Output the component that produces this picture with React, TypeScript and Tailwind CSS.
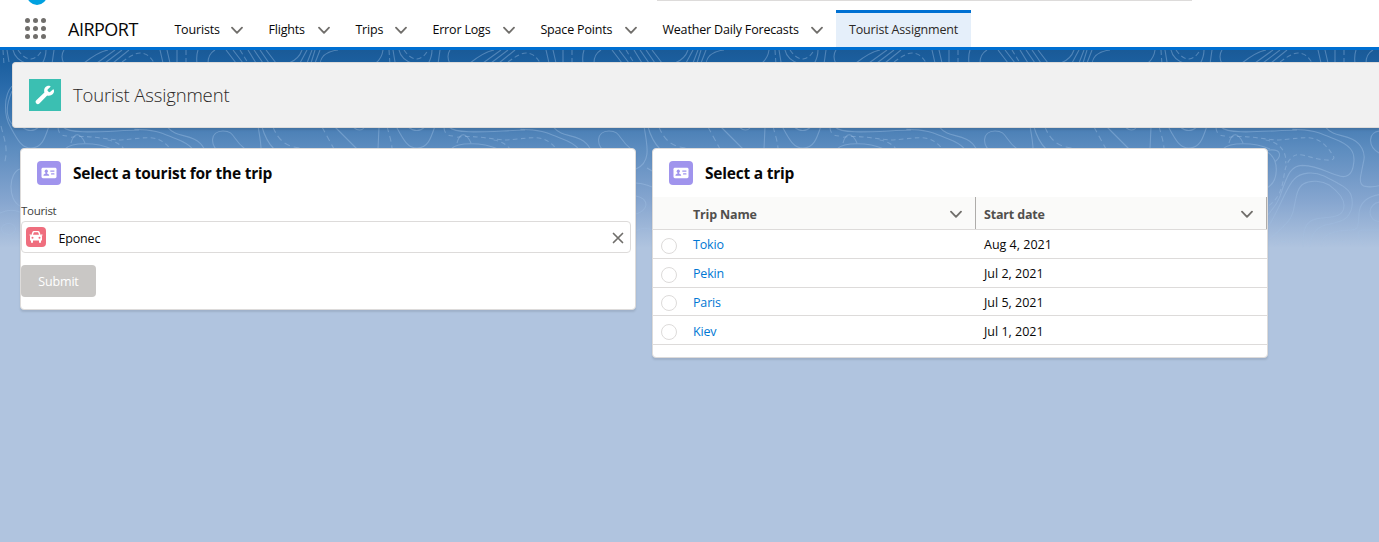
import React from "react";

const NAV = [
  { label: "Tourists", width: "w-[94px]" },
  { label: "Flights", width: "w-[87px]" },
  { label: "Trips", width: "w-[77px]" },
  { label: "Error Logs", width: "w-[108px]" },
  { label: "Space Points", width: "w-[122px]" },
  { label: "Weather Daily Forecasts", width: "w-[186px]" },
];

const TRIPS = [
  { name: "Tokio", date: "Aug 4, 2021", height: "h-[29px]", shift: "pt-[2px]" },
  { name: "Pekin", date: "Jul 2, 2021", height: "h-[29px]", shift: "pt-[2px]" },
  { name: "Paris", date: "Jul 5, 2021", height: "h-[28px]", shift: "pt-[3px]" },
  { name: "Kiev", date: "Jul 1, 2021", height: "h-[29px]", shift: "pt-[4px]" },
];

const TILE = 386;

function Chevron() {
  return (
    <svg className="shrink-0" width="12" height="8" viewBox="0 0 12 8" fill="none" stroke="#706e6b" strokeWidth="1.8" strokeLinecap="round" strokeLinejoin="round">
      <path d="M1 1.6 6 6.8 11 1.6" />
    </svg>
  );
}

function ContactIcon() {
  return (
    <span className="flex size-6 shrink-0 items-center justify-center rounded bg-[#a094ed]">
      <svg width="16" height="12" viewBox="0 0 16 12">
        <rect x="0.5" y="0.8" width="15" height="10.4" rx="1.4" fill="#fff" />
        <g fill="#a094ed">
          <circle cx="5.3" cy="4.2" r="1.6" />
          <path d="M2.4 8.7c0-1.6 1.2-1.9 2.2-2.3V5h1.4v1.4c1 .4 2.2.7 2.2 2.3z" />
          <rect x="9.2" y="3.4" width="4.3" height="1.3" rx=".4" />
          <rect x="10" y="6.3" width="3.5" height="1.3" rx=".4" />
        </g>
      </svg>
    </span>
  );
}

function ContourTile() {
  return (
    <>
      <path d="M7 50 9 62M13 50Q15 60 28 64M46 50Q46 57 42 64M54 50 52 64M64 50Q60 56 64 64M108 50Q98 52 84 63M115 50 97 63M122 50 105 63M129 50 113 63" />
      <path d="M160 50 163 63M167 50 170 63M177 50V63M198 50Q196 56 197 63M215 50Q208 54 208 63M226 50 236 63M233 50 243 63M248 50 256 63M254 50 263 63M260 50 269 63M266 50 276 63" />
      <path d="M289 63Q299 59 302 50M307 50 300 63M312 50 307 63M315 50 311 63M320 50 315 63M338 50Q322 52 320 63M376 63Q382 58 383 50" />
      <path strokeDasharray="5 3" d="M3 50 4 65M18 50Q24 59 31 59 38 58 42 50M122 62Q134 53 140 53 149 53 154 63M186 50V63M240 50 248 63" />
      <path d="M12 86C4 95 3 115 11 128 18 141 22 148 31 148 42 148 45 138 49 126M12 91C6 105 6 117 12 124M22 127Q31 134 39 127" />
      <path d="M20 169C9 172 7 199 20 206M0 213Q10 208 20 212" />
      <ellipse cx="8.5" cy="229" rx="7" ry="5.5" />
      <path strokeDasharray="6 4" d="M1 126C4 139 9 148 4 165M58 127Q58 136 67 136M273 127Q281 148 302 148M322 127 334 149" />
      <path d="M71 143C74 132 80 132 85 143M65 149C72 142 96 142 112 149M335 127 357 149M353 127Q360 133 365 127M379 127 378 149M262 127Q266 141 274 149M221 153C209 146 210 131 223 131 235 131 232 139 245 149" />
      <path d="M63 127C71 135 105 131 139 130" />
      <g transform="translate(101 126) scale(.3333)" strokeWidth="3.3">
        <path d="M100 10C170 10 190 25 225 38C270 55 290 75 284 112C280 150 260 158 235 148C205 140 180 120 130 118C95 118 85 150 70 190C60 230 40 250 20 275" />
        <path d="M200 4C222 30 250 25 280 40C308 54 318 80 315 100L306 145C300 172 308 182 325 182Q345 184 365 178" />
        <path d="M20 315C65 245 80 185 105 160C125 138 165 136 195 150C235 170 268 185 276 207C287 240 274 275 245 285C210 298 190 292 170 315C155 330 152 350 153 375" />
        <path d="M20 350C70 302 98 290 105 245C112 210 115 185 133 174C155 160 190 165 212 178C235 195 256 215 255 240C254 276 215 272 175 278C130 285 132 325 132 375" />
        <path d="M365 205C330 210 303 225 300 262C298 300 300 311 275 312C235 314 215 318 198 332Q186 345 183 375M365 228C325 230 320 285 365 288M365 312H310C290 312 298 342 330 378" />
        <path d="M22 73C75 65 65 95 47 108M25 78C62 100 60 165 24 186" />
        <path strokeDasharray="14 10" d="M-90 34C-40 25 20 42 60 42 110 38 130 33 155 36 185 40 205 60 224 92 230 108 190 102 165 96 120 84 112 80 95 98 62 130 90 195 28 240M20 42C45 45 85 65 80 112M45 360Q75 335 110 355M198 362Q235 332 275 355" />
      </g>
      <path d="M258 126C261 145 266 162 250 169M261 168 273 175M250 183Q262 184 272 190M250 196Q260 198 260 205 259 211 250 214M250 231Q261 224 273 235" />
    </>
  );
}

function Backdrop() {
  return (
    <svg className="pointer-events-none absolute inset-x-0 top-0 -z-10" width="1379" height="198" viewBox="0 50 1379 198" aria-hidden="true">
      <defs>
        <linearGradient id="fade" x1="0" y1="0" x2="0" y2="1">
          <stop offset="0" stopColor="#fff" />
          <stop offset=".7" stopColor="#fff" />
          <stop offset="1" stopColor="#fff" stopOpacity="0.25" />
        </linearGradient>
        <mask id="fadeMask" maskUnits="userSpaceOnUse" x="-10" y="50" width="1400" height="198">
          <rect x="-10" y="50" width="1400" height="198" fill="url(#fade)" />
        </mask>
      </defs>
      <g mask="url(#fadeMask)" fill="none" stroke="#a9c8ea" strokeOpacity=".38" strokeWidth="1.1">
        {[0, 1, 2, 3].map((n) => (
          <g key={n} transform={`translate(${n * TILE} 0)`}>
            <ContourTile />
          </g>
        ))}
      </g>
    </svg>
  );
}

function Card({ title, className, children }: { title: string; className: string; children: React.ReactNode }) {
  return (
    <section className={`w-[616px] rounded border border-[#dddbda] bg-white shadow-[0_2px_2px_rgba(0,0,0,0.1)] ${className}`}>
      <header className="flex h-12 items-center gap-3 pl-4">
        <ContactIcon />
        <h2 className="whitespace-nowrap pt-[2px] text-[15.5px] font-bold tracking-[-0.22px] text-[#080707]">{title}</h2>
      </header>
      {children}
    </section>
  );
}

export default function App() {
  return (
    <div className="flex h-[542px] w-[1379px] flex-col overflow-hidden bg-[#b0c4df] font-['Open_Sans','Noto_Sans',sans-serif] text-[12.5px] tracking-[-0.17px] text-[#080707]">
      <header className="relative flex h-[50px] shrink-0 border-b-[3px] border-[#0070d2] bg-white">
        <span className="absolute left-[27px] top-[-15px] size-5 rounded-full bg-[#00a1e0]" />
        <span className="absolute left-[657px] top-0 h-px w-[535px] bg-[#dddbda]" />
        <div className="flex w-[162px] shrink-0 items-center pt-[11px]">
          <svg className="ml-[25px] shrink-0" width="22" height="22" viewBox="0 0 22 22" fill="#706e6b">
            {[3, 11, 19].map((y) => [3, 11, 19].map((x) => <circle key={`${x}-${y}`} cx={x - 0.5} cy={y - 0.5} r="2.5" />))}
          </svg>
          <span className="ml-[21px] whitespace-nowrap text-[18px] tracking-[-0.5px]">AIRPORT</span>
        </div>
        <nav className="flex pt-[10px]">
          {NAV.map((item) => (
            <a key={item.label} className={`flex h-[37px] items-center justify-between whitespace-nowrap pl-[12.4px] pr-[13px] pt-[3px] ${item.width}`}>
              <span>{item.label}</span>
              <Chevron />
            </a>
          ))}
          <a className="flex h-[37px] w-[135px] items-center justify-center whitespace-nowrap border-t-[3px] border-[#0070d2] bg-[#e5effa] text-[#2b2826]">
            Tourist Assignment
          </a>
        </nav>
      </header>

      <main className="relative isolate flex-1">
        <div className="absolute inset-x-0 top-0 -z-20 h-[198px] bg-[linear-gradient(to_bottom,#1a5a97_0px,#1b5f9f_12px,#2a6bab_38px,#4a7fb5_78px,#5c8cbf_98px,#85a5cf_150px,#b0c4df_198px)]" />
        <Backdrop />
        <div className="ml-3 mt-3 flex h-[66px] items-center gap-3 rounded-l border border-r-0 border-[#dddbda] bg-[#f1f1f1] pl-4 shadow-[0_2px_2px_rgba(0,0,0,0.1)]">
          <span className="flex size-8 items-center justify-center bg-[#3bbfb2]">
            <svg width="20" height="20" viewBox="0 0 20 20" fill="#fff">
              <path d="M17.900 4.400 15.300 6.700a1.300 1.300 0 0 1-1.800 0L12.900 6.100a1.300 1.300 0 0 1 0-1.800L15.300 1.900a.5.5 0 0 0-.3-.9C12 .2 8.700 2.600 9.200 6.500c0 .4.1.8.2 1.100L1.300 15.300a2.200 2.200 0 0 0 0 3.100 2.200 2.200 0 0 0 3.100 0L12.200 10.500c.4.1.8.2 1.200.2 4 .3 6.400-3 5.400-6a.55.55 0 0 0-.9-.3z" />
            </svg>
          </span>
          <h1 className="whitespace-nowrap text-[18.5px] font-light tracking-[-0.15px] text-[#2b2826]">Tourist Assignment</h1>
        </div>

        <div className="ml-5 mt-5 flex items-start gap-4">
          <Card title="Select a tourist for the trip" className="h-[162px]">
            <div className="pr-1">
              <label className="mt-[5px] block h-[19px] text-[11.5px] leading-[18px] tracking-[-0.3px] text-[#3e3e3c]">Tourist</label>
              <div className="flex h-8 w-[610px] items-center rounded border border-[#dddbda] pl-1 pr-[6px]">
                <span className="flex size-5 items-center justify-center rounded bg-[#ef6e7e]">
                  <svg width="14" height="14" viewBox="0 0 14 14">
                    <path fill="#fff" d="M2.300 5 3.300 2.200Q3.700 1 4.900 1H9.100Q10.300 1 10.700 2.200L11.700 5Q13 5.200 13 6.500V10.500H12V12Q12 13 11 13T10 12V10.500H4V12Q4 13 3 13T2 12V10.500H1V6.500Q1 5.200 2.300 5Z M12 4.500h1.500v1H12zM.5 4.500H2v1H.5z" />
                    <path fill="#ef6e7e" d="M4 4.800 4.700 2.700Q4.800 2.300 5.200 2.300H8.800Q9.200 2.300 9.300 2.700L10 4.800Z" />
                    <circle cx="3.500" cy="7.800" r="1" fill="#ef6e7e" />
                    <circle cx="10.500" cy="7.800" r="1" fill="#ef6e7e" />
                  </svg>
                </span>
                <span className="ml-[12.5px] flex-1 pt-[4px]">Eponec</span>
                <svg className="mt-[2px]" width="12" height="12" viewBox="0 0 12 12" fill="none" stroke="#706e6b" strokeWidth="1.7" strokeLinecap="round">
                  <path d="m1.500 1.500 9 9m0-9-9 9" />
                </svg>
              </div>
              <button className="mt-3 h-8 w-[75px] rounded bg-[#c9c7c5] pt-[2px] text-white">Submit</button>
            </div>
          </Card>

          <Card title="Select a trip" className="h-[210px]">
            <div className="flex h-[33px] border-b border-[#dddbda] bg-[#fafaf9] font-bold text-[#514f4d]">
              <div className="flex w-[323px] items-center justify-between border-r border-[#aeacaa] pl-10 pr-[13px]">
                <span className="pt-[4px]">Trip Name</span>
                <span className="pt-[2px]"><Chevron /></span>
              </div>
              <div className="flex flex-1 items-center justify-between border-r border-[#aeacaa] pl-2 pr-[13px]">
                <span className="pt-[4px]">Start date</span>
                <span className="pt-[2px]"><Chevron /></span>
              </div>
            </div>
            {TRIPS.map((trip) => (
              <div key={trip.name} className={`flex items-center border-b border-[#dddbda] ${trip.height}`}>
                <span className="ml-2 mt-[3px] size-4 rounded-full border border-[#dddbda] bg-white" />
                <a className={`ml-4 w-[291px] text-[#0077d4] ${trip.shift}`}>{trip.name}</a>
                <span className={`tracking-[0px] ${trip.shift}`}>{trip.date}</span>
              </div>
            ))}
          </Card>
        </div>
      </main>
    </div>
  );
}
